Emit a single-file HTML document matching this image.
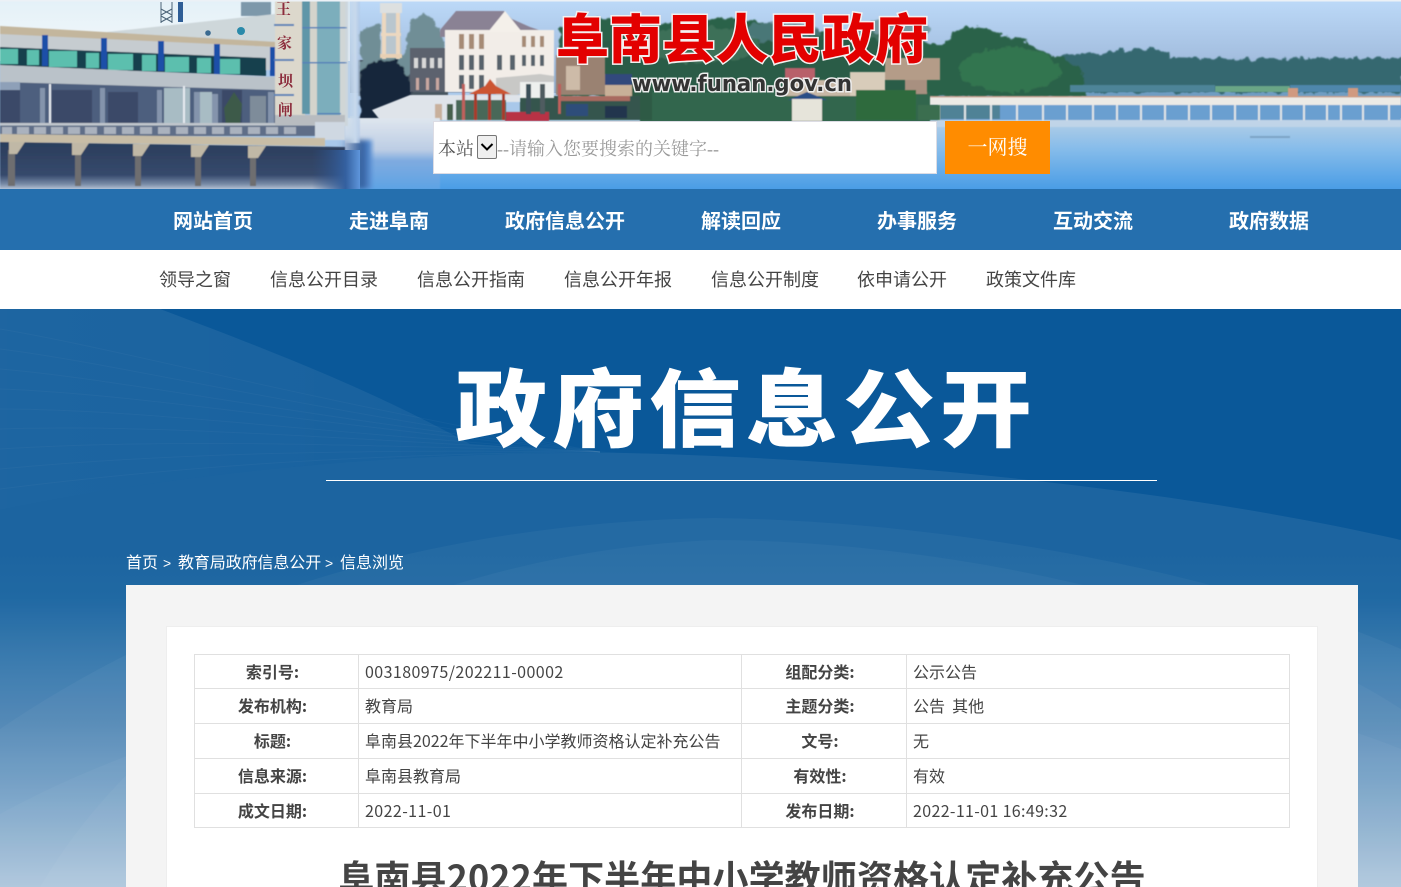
<!DOCTYPE html>
<html lang="zh-CN">
<head>
<meta charset="utf-8">
<title>阜南县人民政府</title>
<style>
html,body{margin:0;padding:0;width:1401px;height:887px;overflow:hidden;background:#0a5899}
body{position:relative;font-family:"Noto Sans CJK SC","Liberation Sans",sans-serif;color:#444}
.a{position:absolute;white-space:nowrap}
.nav{position:absolute;left:0;top:189px;width:1401px;height:61px;background:#256fae}
.nav span{position:absolute;top:1px;line-height:59px;width:176px;text-align:center;color:#fff;font-size:20px;font-weight:700}
.sub{position:absolute;left:0;top:250px;width:1401px;height:59px;background:#fff}
.sub span{position:absolute;top:0;line-height:59px;font-size:18px;color:#444;white-space:nowrap}
.serif{font-family:"Liberation Serif","Noto Serif CJK SC",serif}
table{position:absolute;left:194px;top:654px;width:1095px;border-collapse:collapse;table-layout:fixed;background:#fff;font-size:16px;color:#444}
td{border:1px solid #e0e0e0;padding:0 5px 2px 6px;white-space:nowrap;line-height:20px;overflow:hidden}
td.h{text-align:center;font-weight:700;padding:0 8px 2px 0}
.n{letter-spacing:.42px}
</style>
</head>
<body>
<svg class="a" style="left:0;top:0" width="1401" height="189" viewBox="0 0 1401 189">
<defs>
<linearGradient id="sky" x1="0" y1="0" x2="0" y2="1"><stop offset="0" stop-color="#bcd9f8"/><stop offset=".6" stop-color="#a4bfe0"/><stop offset="1" stop-color="#8aa6c6"/></linearGradient>
<linearGradient id="water" x1="0" y1="0" x2="0" y2="1"><stop offset="0" stop-color="#b9d1e6"/><stop offset=".45" stop-color="#86bcea"/><stop offset="1" stop-color="#4a9de6"/></linearGradient>
<linearGradient id="skyl" x1="0" y1="0" x2="0" y2="1"><stop offset="0" stop-color="#e4f1f8"/><stop offset="1" stop-color="#f4f8fa"/></linearGradient>
<linearGradient id="under" x1="0" y1="0" x2="0" y2="1"><stop offset="0" stop-color="#2b3e5c"/><stop offset=".7" stop-color="#36496c"/><stop offset=".9" stop-color="#7a8ca8"/><stop offset="1" stop-color="#b4c0d2"/></linearGradient>
<linearGradient id="low" x1="0" y1="0" x2="0" y2="1"><stop offset="0" stop-color="#dfe6ee"/><stop offset=".45" stop-color="#bccde4"/><stop offset=".6" stop-color="#7fabe0"/><stop offset="1" stop-color="#5ea3e4"/></linearGradient>
<linearGradient id="fade" x1="0" y1="0" x2="1" y2="0"><stop offset="0" stop-color="#c6d8e8" stop-opacity=".2"/><stop offset=".7" stop-color="#c8d9ec"/><stop offset="1" stop-color="#b0c8e6" stop-opacity=".6"/></linearGradient>
<linearGradient id="cor" x1="0" y1="0" x2="1" y2="0"><stop offset="0" stop-color="#2c4f86" stop-opacity="0"/><stop offset=".7" stop-color="#34609f"/><stop offset="1" stop-color="#5e96dc"/></linearGradient>
<filter id="b1"><feGaussianBlur stdDeviation=".6"/></filter>
<filter id="b3"><feGaussianBlur stdDeviation="2.5"/></filter>
<filter id="b6"><feGaussianBlur stdDeviation="6"/></filter>
<filter id="tree" x="-5%" y="-10%" width="110%" height="120%"><feTurbulence type="fractalNoise" baseFrequency=".12" numOctaves="3" seed="4" result="n"/><feDisplacementMap in="SourceGraphic" in2="n" scale="9" xChannelSelector="R" yChannelSelector="G"/><feGaussianBlur stdDeviation=".7"/></filter>
</defs>
<rect width="1401" height="189" fill="#a9c8ea"/>
<!-- sky + lake -->
<rect x="350" y="1" width="1051" height="92" fill="url(#sky)"/>
<rect x="350" y="116" width="1051" height="73" fill="url(#water)"/>
<rect x="900" y="86" width="501" height="32" fill="#6f9dc2"/>

<!-- far & near tree masses -->
<g filter="url(#tree)">
<path d="M1040 92V58l85-8 30-2 14 9 60 2 80-1 94 0v34z" fill="#34686f"/>
<path d="M560 96V26l40-8 60 6 70-6 60 8 60 8 50-2 30 12 15 0 8-12 14-6 20 2 20 8 20 6 16 10 16 4 14 8 10 10 4 24z" fill="#2c624a"/>
<path d="M600 40h320v60H600z" fill="#285a45" opacity=".7"/>
<ellipse cx="1010" cy="70" rx="50" ry="22" fill="#357a50" opacity=".8"/>
<ellipse cx="700" cy="45" rx="60" ry="18" fill="#44755f" opacity=".75"/>
<ellipse cx="780" cy="32" rx="40" ry="10" fill="#57808a" opacity=".7"/>
<ellipse cx="890" cy="30" rx="40" ry="10" fill="#4f7a72" opacity=".6"/>
</g>
<rect x="1215" y="86" width="75" height="6" fill="#6aa686" filter="url(#b1)"/>
<rect x="1070" y="85" width="145" height="7" fill="#4e8498" filter="url(#b1)"/>
<rect x="1290" y="85" width="111" height="7" fill="#4f87ac" filter="url(#b1)"/>

<!-- far bridge -->
<g filter="url(#b1)">
<rect x="925" y="105" width="476" height="15" fill="#6a9fd0"/>
<rect x="930" y="105" width="70" height="14" fill="#4f8296"/>
<path d="M918 97h483v8H924z" fill="#ecebe6"/>
<rect x="918" y="96" width="483" height="1.5" fill="#c8a090"/>
<g fill="#dfe4e6">
<rect x="938" y="105" width="2" height="16"/><rect x="964" y="105" width="2" height="16"/><rect x="990" y="105" width="2" height="16"/><rect x="1016" y="105" width="2" height="16"/><rect x="1042" y="105" width="2" height="16"/><rect x="1066" y="105" width="2" height="16"/><rect x="1092" y="105" width="2" height="16"/><rect x="1116" y="105" width="2" height="16"/><rect x="1140" y="105" width="2" height="16"/><rect x="1164" y="105" width="2" height="16"/><rect x="1188" y="105" width="2" height="16"/><rect x="1210" y="105" width="2" height="16"/><rect x="1234" y="105" width="2" height="16"/><rect x="1258" y="105" width="2" height="16"/><rect x="1280" y="105" width="2" height="16"/><rect x="1303" y="105" width="2" height="16"/><rect x="1326" y="105" width="2" height="16"/><rect x="1340" y="105" width="2" height="16"/><rect x="1362" y="105" width="2" height="16"/><rect x="1388" y="105" width="2" height="16"/>
</g>
<rect x="1288" y="88" width="10" height="9" fill="#d09a80"/><rect x="1348" y="88" width="10" height="9" fill="#d09a80"/>
<rect x="925" y="120" width="476" height="7" fill="#c4d6e8" opacity=".8"/>
<rect x="1250" y="136" width="40" height="2" fill="#5c7f98" opacity=".45"/>
</g>

<!-- town right under logo -->
<g filter="url(#b1)">
<rect x="640" y="92" width="290" height="30" fill="#30664e"/>
<rect x="785" y="68" width="30" height="14" fill="#b8606a"/>
<rect x="785" y="80" width="65" height="16" fill="#c8b8a6"/>
<rect x="850" y="72" width="35" height="24" fill="#d8ccba"/>
<rect x="885" y="58" width="55" height="22" fill="#b49c88"/>
<rect x="905" y="80" width="22" height="14" fill="#a89080"/>
<path d="M788 100l19-8 20 8z" fill="#2c4d86"/>
<rect x="792" y="99" width="30" height="22" fill="#e6e4da"/>
<rect x="856" y="90" width="60" height="30" fill="#2e6a3e"/>
<rect x="918" y="105" width="22" height="15" fill="#3a6e50"/>
</g>

<!-- mid village -->
<g filter="url(#b1)">
<rect x="358" y="60" width="90" height="36" fill="#46545e"/>
<path d="M556 55h49v40h-49z" fill="#9a8272"/>
<rect x="566" y="66" width="14" height="24" fill="#cdbba8"/>
<rect x="605" y="74" width="27" height="11" fill="#33487c"/>
<rect x="605" y="85" width="27" height="12" fill="#c8b098"/>
<rect x="632" y="80" width="20" height="40" fill="#2e5a44"/>
<rect x="520" y="96" width="120" height="24" fill="#36544e"/>
<rect x="505" y="112" width="44" height="9" fill="#b83344"/>
<rect x="560" y="96" width="70" height="5" fill="#a86a60"/>
<rect x="566" y="104" width="22" height="12" fill="#2f4e7a"/>
<rect x="605" y="106" width="22" height="12" fill="#22344e"/>
</g>
<!-- grey-green trees beside -->
<g filter="url(#tree)">
<path d="M360 60V30l20-6 4 30h20l6-30 14-12 14 12 8 26-2 26H360z" fill="#6f8e96"/>
<path d="M360 128V72l14-12 24 0 14 24-2 24-14 18-20 2z" fill="#17283a"/>
</g>
<g filter="url(#b1)">
<rect x="410" y="48" width="38" height="44" fill="#5b626e"/>
<g fill="#d8d8d8"><rect x="414" y="58" width="4" height="10"/><rect x="422" y="58" width="4" height="10"/><rect x="430" y="58" width="4" height="10"/><rect x="438" y="58" width="4" height="10"/></g>
<g fill="#c8a8a0"><rect x="416" y="78" width="3" height="12"/><rect x="426" y="78" width="3" height="12"/><rect x="436" y="78" width="3" height="12"/></g>
<!-- water tower -->
<rect x="380" y="3" width="22" height="10" fill="#dde0e0"/>
<path d="M382 13h18l2 45h-22z" fill="#b9c6ce"/>
<rect x="382" y="13" width="4" height="46" fill="#ecd8c0"/><rect x="396" y="13" width="4" height="46" fill="#ecd8c0"/>
<rect x="381" y="33" width="20" height="3" fill="#ecd8c0"/><rect x="380" y="54" width="22" height="4" fill="#e8d0b4"/>
<!-- mansion -->
<path d="M440 30l16-19h48l8 8 18 8 24 8v2H440z" fill="#8a8294"/>
<rect x="445" y="30" width="109" height="62" fill="#f2ede8"/>
<path d="M488 32l17-21 17 21z" fill="#f4f0ea"/>
<g fill="#a68b76"><rect x="459" y="34" width="5" height="15"/><rect x="469" y="34" width="5" height="15"/><rect x="479" y="34" width="5" height="15"/><rect x="522" y="36" width="4" height="11"/><rect x="531" y="36" width="4" height="11"/><rect x="540" y="36" width="4" height="11"/></g>
<g fill="#59636c"><rect x="459" y="55" width="5" height="15"/><rect x="469" y="55" width="5" height="15"/><rect x="479" y="55" width="5" height="15"/><rect x="497" y="55" width="5" height="15"/><rect x="510" y="55" width="5" height="15"/><rect x="522" y="55" width="4" height="11"/><rect x="531" y="55" width="4" height="11"/><rect x="540" y="55" width="4" height="11"/><rect x="459" y="75" width="5" height="14"/><rect x="469" y="75" width="5" height="14"/><rect x="479" y="75" width="5" height="14"/></g>
<!-- awning -->
<path d="M496 78l44-4 14 2v6l-40 14h-18z" fill="#c8c8c6"/>
<rect x="520" y="82" width="34" height="16" fill="#eef0ee"/>
<rect x="526" y="84" width="5" height="30" fill="#3a5058"/><rect x="540" y="84" width="5" height="30" fill="#505c60"/>
<!-- pale ground, wall -->
<path d="M410 95h110v7h-16l-4 18H380l-8-10z" fill="#dfe4ea"/>
<rect x="435" y="104" width="7" height="16" fill="#c8b09c"/><rect x="447" y="104" width="6" height="16" fill="#46604e"/>
<rect x="456" y="100" width="50" height="20" fill="#4a6858"/>
<!-- pavilion -->
<path d="M490 79l-5 7-16 8 42 0-15-8z" fill="#cc5430"/>
<rect x="474" y="94" width="3" height="26" fill="#a83a2c"/><rect x="488" y="94" width="3" height="26" fill="#a83a2c"/><rect x="502" y="94" width="3" height="26" fill="#a83a2c"/>
<rect x="462" y="84" width="3" height="36" fill="#c0605c"/><rect x="558" y="84" width="3" height="30" fill="#c0605c"/>
</g>
<rect x="345" y="118" width="95" height="71" fill="url(#low)" filter="url(#b1)"/>
<rect x="340" y="140" width="32" height="49" fill="url(#cor)" filter="url(#b3)"/>

<!-- left sky -->
<rect x="0" y="1" width="350" height="60" fill="url(#skyl)"/>
<g stroke="#4c6478" stroke-width="1" fill="none"><path d="M161 2v21M172 2v21M161 9l11 6M172 9l-11 6M161 16l11 6M172 16l-11 6"/></g>
<path d="M178 2h5v20h-5z" fill="#2f5e96"/>
<!-- left building -->
<g filter="url(#b1)">
<rect x="241" y="2" width="30" height="14" fill="#7d98aa"/>
<path d="M107 32L275 14V46H107z" fill="#ced7da"/>
<path d="M0 33L277 47V70H0z" fill="#c6ccd0"/>
<path d="M0 26L277 42V47L0 34z" fill="#c3b69d"/>
<path d="M0 47L266 58V76L0 66z" fill="#173f4e"/>
<g fill="#5cbfae"><rect x="0" y="49" width="18" height="15"/><rect x="27" y="50" width="12" height="15"/><rect x="49" y="51" width="28" height="16"/><rect x="86" y="53" width="13" height="15"/><rect x="108" y="54" width="25" height="16"/><rect x="142" y="55" width="14" height="16"/><rect x="165" y="57" width="24" height="15"/><rect x="197" y="58" width="14" height="15"/><rect x="220" y="59" width="20" height="15"/></g>
<g fill="#1b50a8"><rect x="42" y="35" width="6" height="31"/><rect x="101" y="38" width="6" height="31"/><rect x="158" y="41" width="6" height="30"/><rect x="214" y="44" width="6" height="30"/><rect x="270" y="47" width="5" height="29"/></g>
<rect x="0" y="80" width="275" height="46" fill="#4e5f7e"/>
<g fill="#3a4a68"><rect x="0" y="90" width="20" height="34"/><rect x="52" y="90" width="40" height="34"/><rect x="108" y="92" width="30" height="32"/><rect x="222" y="90" width="20" height="34"/></g>
<path d="M0 65L275 77V90L0 82z" fill="#bac2c9"/>
<rect x="0" y="82" width="20" height="8" fill="#8ea0b8"/>
<g fill="#8494ac"><rect x="40" y="88" width="5" height="38"/><rect x="100" y="88" width="5" height="38"/><rect x="157" y="90" width="5" height="36"/><rect x="194" y="92" width="6" height="34"/><rect x="212" y="94" width="6" height="32"/><rect x="268" y="92" width="6" height="34"/></g>
<rect x="164" y="88" width="26" height="36" fill="#a8bcc4"/>
<rect x="200" y="92" width="12" height="32" fill="#a8bcc4"/>
<rect x="49" y="84" width="2" height="42" fill="#e6eaf0"/><rect x="183" y="86" width="2" height="40" fill="#e6eaf0"/>
<rect x="250" y="96" width="16" height="30" fill="#7e8c9a"/>
<path d="M234 92l8 12-2 22h-14l-2-18z" fill="#3c5a4a"/>
<rect x="0" y="123" width="315" height="13" fill="#5e6e88"/>
<rect x="0" y="123" width="315" height="2.5" fill="#c0c6cc"/>
<g fill="#aab2be"><rect x="2" y="127" width="10" height="7"/><rect x="17" y="127" width="12" height="7"/><rect x="34" y="127" width="12" height="7"/><rect x="51" y="127" width="12" height="7"/><rect x="68" y="127" width="12" height="7"/><rect x="85" y="127" width="12" height="7"/><rect x="104" y="127" width="12" height="7"/><rect x="122" y="127" width="12" height="7"/><rect x="140" y="127" width="12" height="7"/><rect x="158" y="127" width="12" height="7"/><rect x="176" y="127" width="12" height="7"/><rect x="194" y="127" width="12" height="7"/><rect x="212" y="127" width="12" height="7"/><rect x="230" y="127" width="12" height="7"/><rect x="248" y="127" width="12" height="7"/><rect x="266" y="127" width="12" height="7"/><rect x="284" y="127" width="12" height="7"/></g>
<!-- tower -->
<rect x="275" y="1" width="30" height="124" fill="#dcd8cc"/>
<rect x="302" y="1" width="8" height="113" fill="#5e96a8"/>
<rect x="310" y="1" width="8" height="124" fill="#d4d4cc"/>
<rect x="317" y="1" width="23" height="114" fill="#7caebc"/>
<rect x="340" y="1" width="8" height="125" fill="#d0d6d6"/>
<g fill="#5682b8"><rect x="274" y="24" width="20" height="2"/><rect x="274" y="59" width="20" height="2"/><rect x="274" y="94" width="20" height="2"/><rect x="302" y="27" width="45" height="1.5"/><rect x="302" y="62" width="45" height="1.5"/><rect x="317" y="113" width="24" height="1.5"/></g>
<rect x="275" y="115" width="70" height="10" fill="#b8bcc0"/>
<rect x="315" y="122" width="30" height="18" fill="#cfd8e2"/>
<path d="M0 134L325 138V146L0 142z" fill="#c8bda6"/>
<path d="M0 142L345 147V189H0z" fill="url(#under)"/>
<g fill="#6e6e70"><rect x="8" y="150" width="7" height="36"/><rect x="75" y="150" width="6" height="36"/><rect x="135" y="150" width="6" height="36"/><rect x="195" y="150" width="6" height="36"/><rect x="250" y="150" width="6" height="36"/></g>
<g fill="#c0b8a6"><path d="M9 142h16l-8 12H9z"/><path d="M72 143h17l-8 12h-9z"/><path d="M133 144h17l-8 12h-9z"/><path d="M191 145h18l-8 12h-10z"/><path d="M248 146h18l-8 12h-10z"/></g>
</g>
<text x="276" y="14" font-size="15" font-weight="700" fill="#8c2c3c" font-family="'Noto Serif CJK SC',serif">王</text>
<text x="277" y="48" font-size="15" font-weight="700" fill="#8c2c3c" font-family="'Noto Serif CJK SC',serif">家</text>
<text x="278" y="86" font-size="15" font-weight="700" fill="#8c2c3c" font-family="'Noto Serif CJK SC',serif">坝</text>
<text x="278" y="115" font-size="15" font-weight="700" fill="#8c2c3c" font-family="'Noto Serif CJK SC',serif">闸</text>
<circle cx="208" cy="33" r="2.8" fill="#3a6a90"/><circle cx="241" cy="31" r="4" fill="#2a8aaa"/>
<!-- blend -->
<rect x="345" y="1" width="15" height="142" fill="url(#fade)" filter="url(#b1)"/>
<rect x="312" y="150" width="48" height="39" fill="url(#cor)"/>
<rect y="0" width="1401" height="1.5" fill="#ecf1f6"/>
<!-- logo text -->
<text x="556" y="58" font-family="'Noto Sans CJK SC',sans-serif" font-weight="900" font-size="53" fill="#e30000" stroke="#f4f0f0" stroke-width="3" paint-order="stroke" textLength="372" lengthAdjust="spacing">阜南县人民政府</text>
<text x="632" y="91" font-family="'DejaVu Sans','Liberation Sans',sans-serif" font-weight="700" font-size="22" fill="#333" stroke="#eee" stroke-width="3" paint-order="stroke" textLength="220" lengthAdjust="spacingAndGlyphs">www.funan.gov.cn</text>
</svg>

<div class="a" style="left:433px;top:121px;width:502px;height:51px;background:#fff;border:1px solid #dcdce4"></div>
<div class="a serif" style="left:438px;top:136px;font-size:18px;line-height:26px;color:#555">本站</div>
<div class="a" style="left:477px;top:135px;width:18px;height:22px;background:#efefef;border:1px solid #767676;border-radius:2px"><svg width="18" height="22" viewBox="0 0 18 22" style="display:block"><path d="M3.5 8l5.5 5.5L14.5 8" fill="none" stroke="#000" stroke-width="2"/></svg></div>
<div class="a serif" style="left:497px;top:136px;font-size:18px;line-height:26px;color:#9a9a9a">--请输入您要搜索的关键字--</div>
<div class="a serif" style="left:945px;top:121px;width:105px;height:53px;background:#ff8c00;color:#fff;font-size:20px;line-height:54px;text-align:center">一网搜</div>

<div class="nav">
<span style="left:125px">网站首页</span><span style="left:301px">走进阜南</span><span style="left:477px">政府信息公开</span><span style="left:653px">解读回应</span><span style="left:829px">办事服务</span><span style="left:1005px">互动交流</span><span style="left:1181px">政府数据</span>
</div>
<div class="sub">
<span style="left:159px">领导之窗</span><span style="left:270px">信息公开目录</span><span style="left:417px">信息公开指南</span><span style="left:564px">信息公开年报</span><span style="left:711px">信息公开制度</span><span style="left:857px">依申请公开</span><span style="left:986px">政策文件库</span>
</div>

<svg class="a" style="left:0;top:309px" width="1401" height="578" viewBox="0 0 1401 578">
<defs>
<linearGradient id="bg" x1="0" y1="0" x2="0" y2="1"><stop offset="0" stop-color="#0a5899"/><stop offset=".42" stop-color="#0a5899"/><stop offset=".5" stop-color="#0f5d9c"/><stop offset=".6" stop-color="#2a70a8"/><stop offset=".72" stop-color="#4881b2"/><stop offset=".85" stop-color="#6f9dc4"/><stop offset="1" stop-color="#a5c0d9"/></linearGradient>
<linearGradient id="tl" x1="0" y1="0" x2="1" y2="0"><stop offset="0" stop-color="#fff" stop-opacity=".08"/><stop offset=".6" stop-color="#fff" stop-opacity=".06"/><stop offset="1" stop-color="#fff" stop-opacity=".03"/></linearGradient>
</defs>
<rect width="1401" height="578" fill="url(#bg)"/>
<path d="M0 0H160C280 45 380 85 470 135C520 138 570 141 625 144C420 142 200 160 0 201z" fill="url(#tl)"/>
<g stroke="#fff" stroke-opacity=".03" fill="none">
<path d="M0 20C120 40 300 90 600 143"/><path d="M0 40C120 55 300 100 600 143"/><path d="M0 60C120 70 300 108 600 143"/><path d="M0 80C140 85 320 116 600 143"/><path d="M0 100C140 100 320 124 600 143"/><path d="M0 120C160 115 340 130 600 143"/><path d="M0 140C160 130 340 135 600 143"/><path d="M0 160C160 145 340 140 600 143"/><path d="M0 180C160 160 340 145 600 143"/>
</g>
<path d="M0 201C200 160 420 142 625 144C880 150 1180 180 1401 231V578H0z" fill="#fff" fill-opacity=".075"/>
<path d="M0 420C220 270 480 212 715 209C950 212 1220 262 1401 340V578H0z" fill="#fff" fill-opacity=".04"/>
<path d="M40 578C180 340 480 240 715 231C960 232 1250 300 1401 400V578z" fill="#fff" fill-opacity=".035"/>
<path d="M0 578V505C200 395 500 340 715 330C1000 335 1250 380 1401 440V578z" fill="#fff" fill-opacity=".035"/>
</svg>

<div class="a" style="left:455px;top:348.5px;font-family:'Noto Sans CJK SC',sans-serif;font-weight:900;font-size:92px;line-height:120px;letter-spacing:5px;color:#fff;transform:scaleY(.92);transform-origin:0 0">政府信息公开</div>
<div class="a" style="left:326px;top:480px;width:831px;height:1px;background:#fff"></div>

<div class="a" style="left:126px;top:551px;font-size:16px;line-height:20px;color:#fff">首页</div>
<div class="a" style="left:163px;top:552px;font-size:14px;line-height:22px;color:#fff;font-family:'Liberation Sans',sans-serif">&gt;</div>
<div class="a" style="left:178px;top:551px;font-size:16px;line-height:20px;color:#fff;letter-spacing:-.1px">教育局政府信息公开</div>
<div class="a" style="left:325px;top:552px;font-size:14px;line-height:22px;color:#fff;font-family:'Liberation Sans',sans-serif">&gt;</div>
<div class="a" style="left:340px;top:551px;font-size:16px;line-height:20px;color:#fff">信息浏览</div>

<div class="a" style="left:126px;top:585px;width:1232px;height:302px;background:#f4f4f4"></div>
<div class="a" style="left:166px;top:626px;width:1150px;height:261px;background:#fff;border:1px solid #eee;border-bottom:0"></div>

<table>
<colgroup><col style="width:164px"><col style="width:383px"><col style="width:165px"><col style="width:383px"></colgroup>
<tr style="height:34px"><td class="h">索引号:</td><td class="n">003180975/202211-00002</td><td class="h">组配分类:</td><td>公示公告</td></tr>
<tr style="height:35px"><td class="h">发布机构:</td><td>教育局</td><td class="h">主题分类:</td><td>公告&nbsp;&nbsp;其他</td></tr>
<tr style="height:35px"><td class="h">标题:</td><td>阜南县2022年下半年中小学教师资格认定补充公告</td><td class="h">文号:</td><td>无</td></tr>
<tr style="height:35px"><td class="h">信息来源:</td><td>阜南县教育局</td><td class="h">有效性:</td><td>有效</td></tr>
<tr style="height:34px"><td class="h">成文日期:</td><td class="n">2022-11-01</td><td class="h">发布日期:</td><td class="n" style="letter-spacing:.35px">2022-11-01 16:49:32</td></tr>
</table>

<div class="a" style="left:167px;width:1150px;top:851px;text-align:center;font-size:36px;font-weight:700;line-height:50px;letter-spacing:.1px;color:#444">阜南县2022年下半年中小学教师资格认定补充公告</div>
</body>
</html>
